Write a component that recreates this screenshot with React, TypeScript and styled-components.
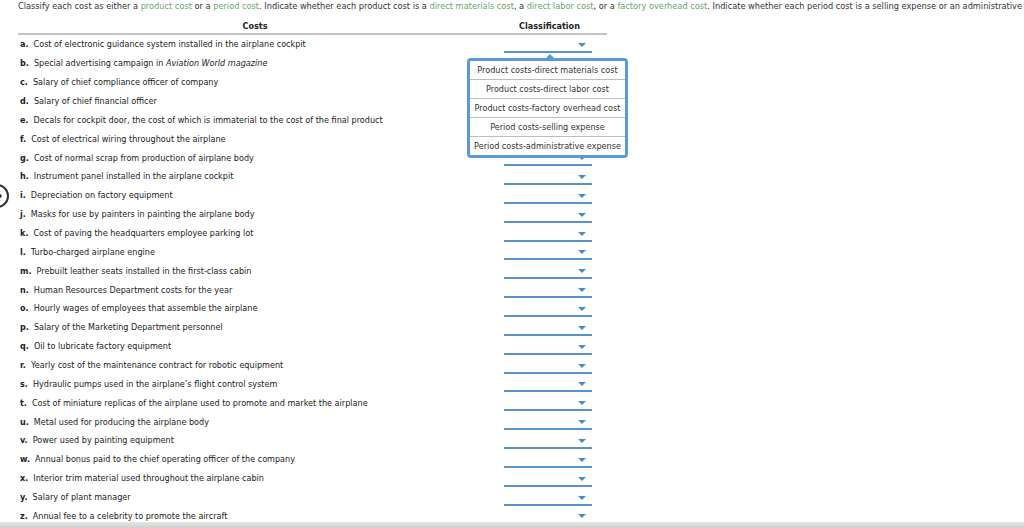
import styled, { createGlobalStyle } from "styled-components";

const GlobalStyle = createGlobalStyle`
    html, body {
        margin: 0;
        padding: 0;
        background: #ffffff;
    }
    body {
        font-family: "DejaVu Sans", Verdana, sans-serif;
        font-size: 8.1px;
        color: #222;
        overflow: hidden;
    }
`;

const Page = styled.div`
    width: 1024px;
    height: 528px;
    padding-left: 18px;
    box-sizing: border-box;
    position: relative;
    overflow: hidden;
`;

const Instructions = styled.p`
    margin: 0;
    padding-top: 1px;
    height: 15px;
    white-space: nowrap;
    color: #333;
    font-size: 8.22px;
    line-height: 10px;
`;

const Term = styled.span`
    color: #6ba56b;
`;

const Table = styled.div`
    width: 589px;
    display: grid;
    grid-template-columns: 474px 115px;
`;

const HeadCell = styled.div`
    height: 19px;
    padding-top: 2px;
    box-sizing: border-box;
    display: flex;
    align-items: center;
    justify-content: center;
    font-weight: bold;
    color: #222;
    border-bottom: 2px solid #c4c4c4;
`;

const Label = styled.div`
    height: 18.86px;
    display: flex;
    align-items: center;
    padding-left: 2px;
    white-space: nowrap;
`;

const Letter = styled.b`
    margin-right: 5px;
`;

const SelectCell = styled.div`
    height: 18.86px;
    display: flex;
    justify-content: center;
    position: relative;
`;

const Select = styled.div`
    width: 82px;
    height: 12px;
    margin-top: 4px;
    margin-left: -3px;
    border-bottom: 2px solid #5b93c7;
    display: flex;
    justify-content: flex-end;
    align-items: center;
    padding-right: 6px;
    box-sizing: content-box;
`;

const Arrow = styled.span`
    width: 0;
    height: 0;
    border-left: 4px solid transparent;
    border-right: 4px solid transparent;
    border-top: 4px solid #4a8ac6;
`;

const Menu = styled.div`
    position: absolute;
    top: 23px;
    left: -25px;
    width: 155px;
    background: #fff;
    border: 3px solid #5b9bd5;
    border-radius: 4px;
    z-index: 5;
    &::before {
        content: "";
        position: absolute;
        top: -7px;
        left: 76px;
        border-left: 4px solid transparent;
        border-right: 4px solid transparent;
        border-bottom: 4px solid #5b9bd5;
    }
`;

const Option = styled.div`
    height: 18px;
    display: flex;
    align-items: center;
    justify-content: center;
    white-space: nowrap;
    color: #333;
    & + & {
        border-top: 1px solid #bdbdbd;
    }
`;

const NavCircle = styled.div`
    position: absolute;
    left: -15px;
    top: 184px;
    width: 24px;
    height: 24px;
    border: 2px solid #333;
    border-radius: 50%;
    background: #fff;
    display: flex;
    align-items: center;
    justify-content: flex-end;
    padding-right: 4px;
    box-sizing: border-box;
`;

const BottomBar = styled.div`
    position: absolute;
    left: 0;
    bottom: 0;
    width: 100%;
    height: 6px;
    background: linear-gradient(#e6e6e6, #cfcfcf);
`;

const costs: { letter: string; text: React.ReactNode }[] = [
    { letter: "a.", text: "Cost of electronic guidance system installed in the airplane cockpit" },
    { letter: "b.", text: <>Special advertising campaign in <i>Aviation World magazine</i></> },
    { letter: "c.", text: "Salary of chief compliance officer of company" },
    { letter: "d.", text: "Salary of chief financial officer" },
    { letter: "e.", text: "Decals for cockpit door, the cost of which is immaterial to the cost of the final product" },
    { letter: "f.", text: "Cost of electrical wiring throughout the airplane" },
    { letter: "g.", text: "Cost of normal scrap from production of airplane body" },
    { letter: "h.", text: "Instrument panel installed in the airplane cockpit" },
    { letter: "i.", text: "Depreciation on factory equipment" },
    { letter: "j.", text: "Masks for use by painters in painting the airplane body" },
    { letter: "k.", text: "Cost of paving the headquarters employee parking lot" },
    { letter: "l.", text: "Turbo-charged airplane engine" },
    { letter: "m.", text: "Prebuilt leather seats installed in the first-class cabin" },
    { letter: "n.", text: "Human Resources Department costs for the year" },
    { letter: "o.", text: "Hourly wages of employees that assemble the airplane" },
    { letter: "p.", text: "Salary of the Marketing Department personnel" },
    { letter: "q.", text: "Oil to lubricate factory equipment" },
    { letter: "r.", text: "Yearly cost of the maintenance contract for robotic equipment" },
    { letter: "s.", text: "Hydraulic pumps used in the airplane’s flight control system" },
    { letter: "t.", text: "Cost of miniature replicas of the airplane used to promote and market the airplane" },
    { letter: "u.", text: "Metal used for producing the airplane body" },
    { letter: "v.", text: "Power used by painting equipment" },
    { letter: "w.", text: "Annual bonus paid to the chief operating officer of the company" },
    { letter: "x.", text: "Interior trim material used throughout the airplane cabin" },
    { letter: "y.", text: "Salary of plant manager" },
    { letter: "z.", text: "Annual fee to a celebrity to promote the aircraft" },
];

const options = [
    "Product costs-direct materials cost",
    "Product costs-direct labor cost",
    "Product costs-factory overhead cost",
    "Period costs-selling expense",
    "Period costs-administrative expense",
];

export default function App() {
    return (
        <>
            <GlobalStyle />
            <Page>
                <Instructions>
                    Classify each cost as either a <Term>product cost</Term> or a <Term>period cost</Term>. Indicate whether each product cost is a{" "}
                    <Term>direct materials cost</Term>, a <Term>direct labor cost</Term>, or a <Term>factory overhead cost</Term>. Indicate whether
                    each period cost is a selling expense or an administrative expense.
                </Instructions>
                <Table>
                    <HeadCell>Costs</HeadCell>
                    <HeadCell>Classification</HeadCell>
                    {costs.map((c, i) => (
                        <>
                            <Label key={"l" + c.letter}>
                                <Letter>{c.letter}</Letter>
                                <span>{c.text}</span>
                            </Label>
                            <SelectCell key={"s" + c.letter}>
                                <Select>
                                    <Arrow />
                                </Select>
                                {i === 0 && (
                                    <Menu>
                                        {options.map((o) => (
                                            <Option key={o}>{o}</Option>
                                        ))}
                                    </Menu>
                                )}
                            </SelectCell>
                        </>
                    ))}
                </Table>
                <NavCircle>
                    <svg width="8" height="10" viewBox="0 0 8 10">
                        <path d="M2 1 L6 5 L2 9" fill="none" stroke="#333" strokeWidth="1.6" />
                    </svg>
                </NavCircle>
                <BottomBar />
            </Page>
        </>
    );
}
